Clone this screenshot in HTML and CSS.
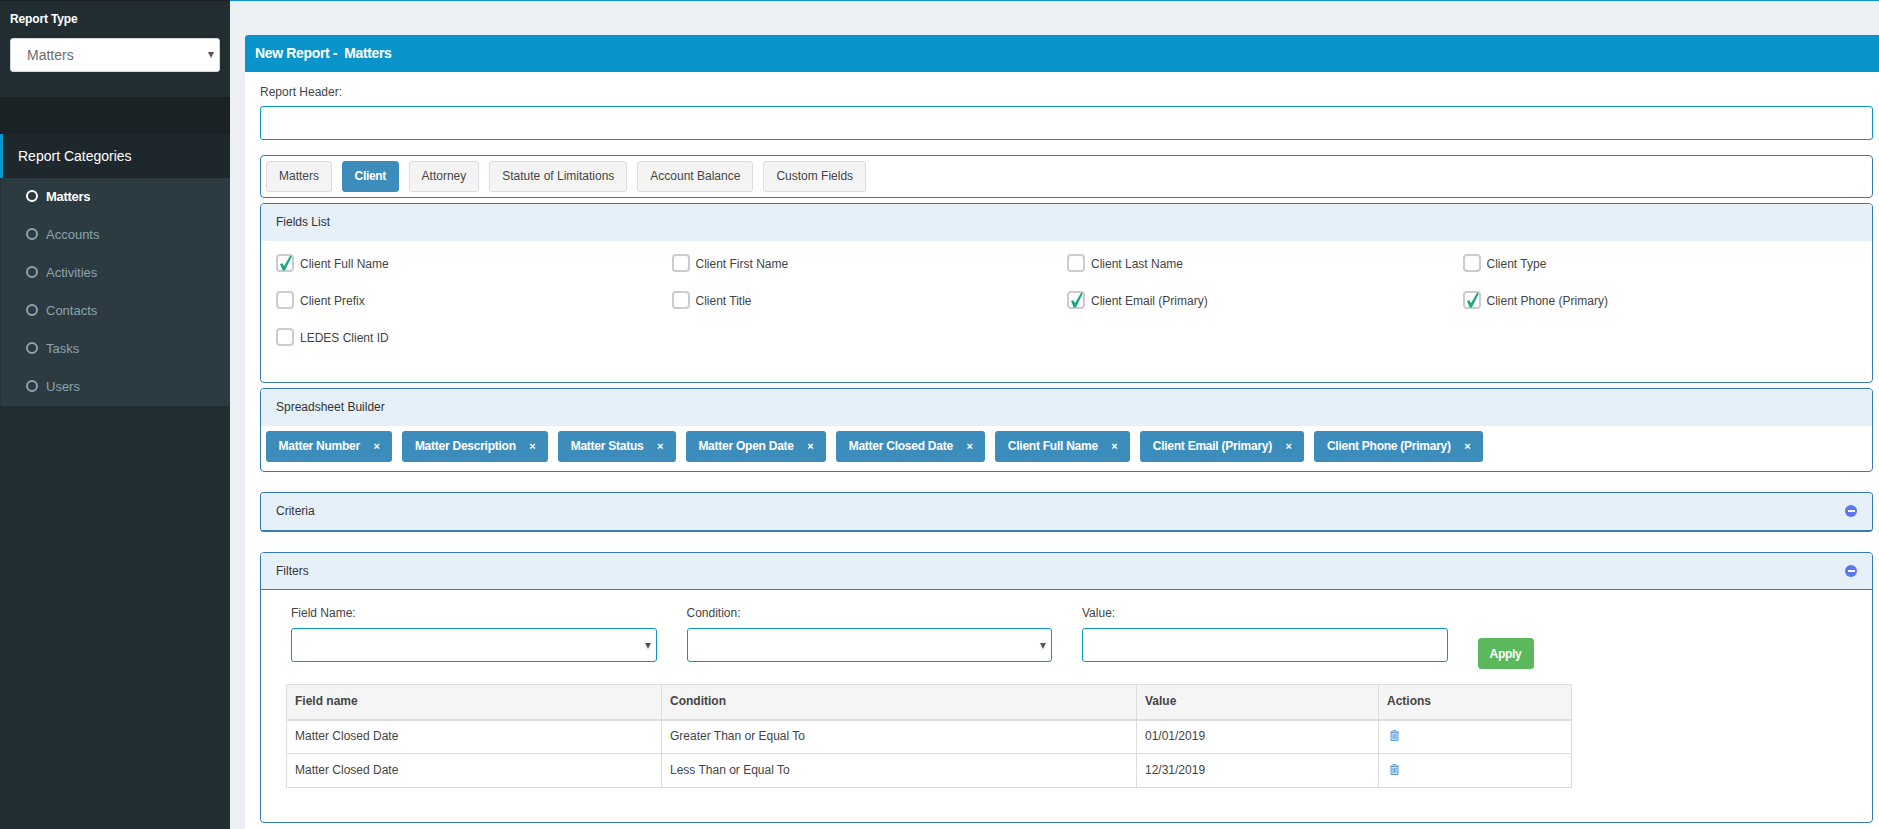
FILE: index.html
```html
<!DOCTYPE html>
<html lang="en">
<head>
<meta charset="utf-8">
<title>New Report</title>
<link rel="stylesheet" href="styles.css">
</head>
<body>
<div class="app">
  <aside class="sidebar">
    <div class="type-block">
      <div class="type-label">Report Type</div>
      <div class="select type-select"><span>Matters</span><i class="caret"></i></div>
    </div>
    <div class="dark-band"></div>
    <div class="cat-title">Report Categories</div>
    <ul class="cat-menu">
      <li class="active"><i class="ring"></i>Matters</li>
      <li><i class="ring"></i>Accounts</li>
      <li><i class="ring"></i>Activities</li>
      <li><i class="ring"></i>Contacts</li>
      <li><i class="ring"></i>Tasks</li>
      <li><i class="ring"></i>Users</li>
    </ul>
  </aside>
  <main class="main">
    <section class="box">
      <header class="box-head">New Report -&nbsp; Matters</header>
      <div class="box-body">
        <label class="lbl header-lbl">Report Header:</label>
        <div class="input"></div>
        <div class="panel tabs">
          <span class="tab">Matters</span>
          <span class="tab on">Client</span>
          <span class="tab">Attorney</span>
          <span class="tab">Statute of Limitations</span>
          <span class="tab">Account Balance</span>
          <span class="tab">Custom Fields</span>
        </div>
        <div class="panel fields">
          <div class="panel-head">Fields List</div>
          <div class="field-grid">
            <div class="chk"><span class="cb"><svg viewBox="0 0 18 18" class="tick"><path d="M4 10 L6.4 9.2 L8 12.2 L14.2 1.6 L15.8 2.4 L8.8 16.4 L6.8 16.4 Z"/></svg></span>Client Full Name</div>
            <div class="chk"><span class="cb"></span>Client First Name</div>
            <div class="chk"><span class="cb"></span>Client Last Name</div>
            <div class="chk"><span class="cb"></span>Client Type</div>
            <div class="chk"><span class="cb"></span>Client Prefix</div>
            <div class="chk"><span class="cb"></span>Client Title</div>
            <div class="chk"><span class="cb"><svg viewBox="0 0 18 18" class="tick"><path d="M4 10 L6.4 9.2 L8 12.2 L14.2 1.6 L15.8 2.4 L8.8 16.4 L6.8 16.4 Z"/></svg></span>Client Email (Primary)</div>
            <div class="chk"><span class="cb"><svg viewBox="0 0 18 18" class="tick"><path d="M4 10 L6.4 9.2 L8 12.2 L14.2 1.6 L15.8 2.4 L8.8 16.4 L6.8 16.4 Z"/></svg></span>Client Phone (Primary)</div>
            <div class="chk"><span class="cb"></span>LEDES Client ID</div>
          </div>
        </div>
        <div class="panel builder">
          <div class="panel-head">Spreadsheet Builder</div>
          <div class="chips">
            <span class="chip">Matter Number<b>×</b></span>
            <span class="chip">Matter Description<b>×</b></span>
            <span class="chip">Matter Status<b>×</b></span>
            <span class="chip">Matter Open Date<b>×</b></span>
            <span class="chip">Matter Closed Date<b>×</b></span>
            <span class="chip">Client Full Name<b>×</b></span>
            <span class="chip">Client Email (Primary)<b>×</b></span>
            <span class="chip">Client Phone (Primary)<b>×</b></span>
          </div>
        </div>
        <div class="panel criteria">
          <div class="panel-head split">Criteria<i class="minus"></i></div>
        </div>
        <div class="panel filters">
          <div class="panel-head split ruled">Filters<i class="minus"></i></div>
          <div class="filter-body">
            <div class="filter-grid">
              <div class="fcol"><label class="lbl">Field Name:</label><div class="select f-select"><i class="caret"></i></div></div>
              <div class="fcol"><label class="lbl">Condition:</label><div class="select f-select"><i class="caret"></i></div></div>
              <div class="fcol"><label class="lbl">Value:</label><div class="select f-select"></div></div>
              <div class="fcol"><button class="apply">Apply</button></div>
            </div>
            <table class="ftable">
              <colgroup><col class="c1"><col class="c2"><col class="c3"><col class="c4"></colgroup>
              <thead><tr><th>Field name</th><th>Condition</th><th>Value</th><th>Actions</th></tr></thead>
              <tbody>
                <tr><td>Matter Closed Date</td><td>Greater Than or Equal To</td><td>01/01/2019</td><td><svg class="trash" viewBox="0 0 9 11"><path class="tb" d="M1 2.5h7v8H1z"/><path class="tl" d="M3 1.5V.5h3v1M0 2h9M3 4v5M4.5 4v5M6 4v5"/></svg></td></tr>
                <tr><td>Matter Closed Date</td><td>Less Than or Equal To</td><td>12/31/2019</td><td><svg class="trash" viewBox="0 0 9 11"><path class="tb" d="M1 2.5h7v8H1z"/><path class="tl" d="M3 1.5V.5h3v1M0 2h9M3 4v5M4.5 4v5M6 4v5"/></svg></td></tr>
              </tbody>
            </table>
          </div>
        </div>
      </div>
    </section>
  </main>
</div>
</body>
</html>
```
FILE: styles.css
```css
* { box-sizing: border-box; }
html, body { margin: 0; padding: 0; height: 829px; overflow: hidden; }
body { font-family: "Liberation Sans", Arial, sans-serif; font-size: 12px; color: #333; }
.app { display: flex; height: 829px; }

.sidebar { width: 230px; flex: none; background: #222d32; border-top: 1px solid #1a2226; }
.type-block { height: 96px; padding: 11px 10px 0; }
.type-label { font-size: 12px; font-weight: 700; color: #fff; line-height: 14px; margin-bottom: 12px; letter-spacing: -.15px; }
.select { position: relative; background: #fff; border-radius: 3px; }
.type-select { height: 34px; border: 1px solid #d2d6de; padding-left: 16px; line-height: 32px; font-size: 14px; color: #6b6b6b; }
.caret { position: absolute; right: 5px; top: 13px; width: 0; height: 0; border-left: 3.5px solid transparent; border-right: 3.5px solid transparent; border-top: 6px solid #555; }
.dark-band { height: 37px; background: #1a2226; }
.cat-title { height: 44px; background: #1e282c; border-left: 3px solid #0a94cc; padding-left: 15px; line-height: 44px; font-size: 14px; color: #fff; }
.cat-menu { list-style: none; margin: 0; padding: 0; background: #2c3b41; border-left: 1px solid #263238; }
.cat-menu li { height: 38px; display: flex; align-items: center; padding: 0 0 2px 25px; font-size: 13px; color: #8aa4af; }
.cat-menu li.active { color: #fff; font-weight: 700; letter-spacing: -.3px; }
.ring { width: 12px; height: 12px; border: 2px solid #8aa4af; border-radius: 50%; margin-right: 8px; flex: none; }
.active .ring { border-color: #fff; }

.main { flex: 1; min-width: 0; background: #ecf0f5; border-top: 1px solid #0a94cc; padding: 34px 0 0 15px; }
.box { background: #fff; height: 794px; }
.box-head { height: 37px; background: #0a94cc; color: #fff; font-size: 14px; font-weight: 700; line-height: 37px; padding-left: 10px; border-radius: 3px 0 0 0; letter-spacing: -.35px; }
.box-body { padding: 13px 6px 0 15px; }
.lbl { display: block; font-size: 12px; color: #444; line-height: 14px; margin-bottom: 7px; }
.fcol .lbl { margin-bottom: 8px; }
.input { height: 34px; border: 1px solid #0a94cc; border-radius: 3px; background: #fff; }

.panel { border: 1px solid #337ab7; border-radius: 4px; background: #fff; overflow: hidden; margin-top: 5px; }
.panel-head { background: #e6f0f9; height: 37px; line-height: 36px; padding-left: 15px; color: #333; }
.split { display: flex; align-items: center; justify-content: space-between; padding: 0 15px 1px; }
.ruled { border-bottom: 1px solid #337ab7; }

.tabs { margin-top: 15px; height: 43px; display: flex; gap: 10px; padding: 5px 0 0 5px; }
.tab { height: 31px; line-height: 29px; padding: 0 12px; border: 1px solid #ddd; border-radius: 3px; background: #f4f4f4; color: #444; }
.tab.on { background: #3c8dbc; border-color: #3c8dbc; color: #fff; font-weight: 700; letter-spacing: -.3px; padding: 0 11.5px; }

.fields { height: 180px; }
.field-grid { display: grid; grid-template-columns: repeat(4, 395.5px); grid-auto-rows: 37px; padding: 13px 0 0 15px; }
.chk { display: flex; align-items: flex-start; line-height: 20px; color: #444; }
.cb { width: 18px; height: 18px; border: 2px solid #ccc; border-radius: 4px; margin-right: 6px; position: relative; flex: none; }
.tick { position: absolute; left: -2px; top: -2px; width: 18px; height: 18px; overflow: visible; }
.tick path { fill: #14a97f; }

.builder { height: 84px; }
.chips { display: flex; gap: 10px; padding: 5px 0 0 5px; }
.chip { height: 31px; line-height: 31px; padding: 0 12.5px; background: #3c8dbc; border-radius: 3px; color: #fff; font-weight: 700; white-space: nowrap; display: flex; letter-spacing: -.25px; }
.chip b { font-size: 11px; margin-left: 13.5px; letter-spacing: 0; }

.criteria { margin-top: 20px; height: 40px; border-bottom-width: 2px; }
.filters { margin-top: 20px; height: 271px; }
.minus { width: 12px; height: 12px; border-radius: 50%; background: #5c76f2; position: relative; }
.minus::after { content: ""; position: absolute; left: 2.5px; right: 2.5px; top: 5px; height: 2px; background: #fff; }

.filter-body { padding: 16px 0 0 15px; }
.filter-grid { display: grid; grid-template-columns: repeat(4, 395.5px); }
.fcol { padding: 0 15px; }
.f-select { height: 34px; border: 1px solid #0a94cc; }
.f-select .caret { top: 14px; }
.apply { margin-top: 32px; width: 56px; height: 31px; border: 1px solid #5cb85c; border-radius: 3px; background: #5cb85c; color: #fff; font: 700 12px "Liberation Sans", Arial, sans-serif; letter-spacing: -.3px; padding: 0; }

.ftable { border-collapse: collapse; table-layout: fixed; width: 1285px; margin: 15px 0 0 10px; font-size: 12px; }
.c1 { width: 375px; } .c2 { width: 475px; } .c3 { width: 242px; } .c4 { width: 193px; }
.ftable th, .ftable td { border: 1px solid #ddd; padding: 0 8px 2px; text-align: left; height: 34px; color: #444; }
.ftable th { background: #f5f5f5; font-weight: 700; border-bottom-width: 2px; height: 35px; }
.trash { display: block; width: 9px; height: 11px; margin-left: 3px; }
.tb { fill: #cfe1f2; stroke: #5b9bd1; stroke-width: 1; }
.tl { fill: none; stroke: #6aa6da; stroke-width: 1; }
```
